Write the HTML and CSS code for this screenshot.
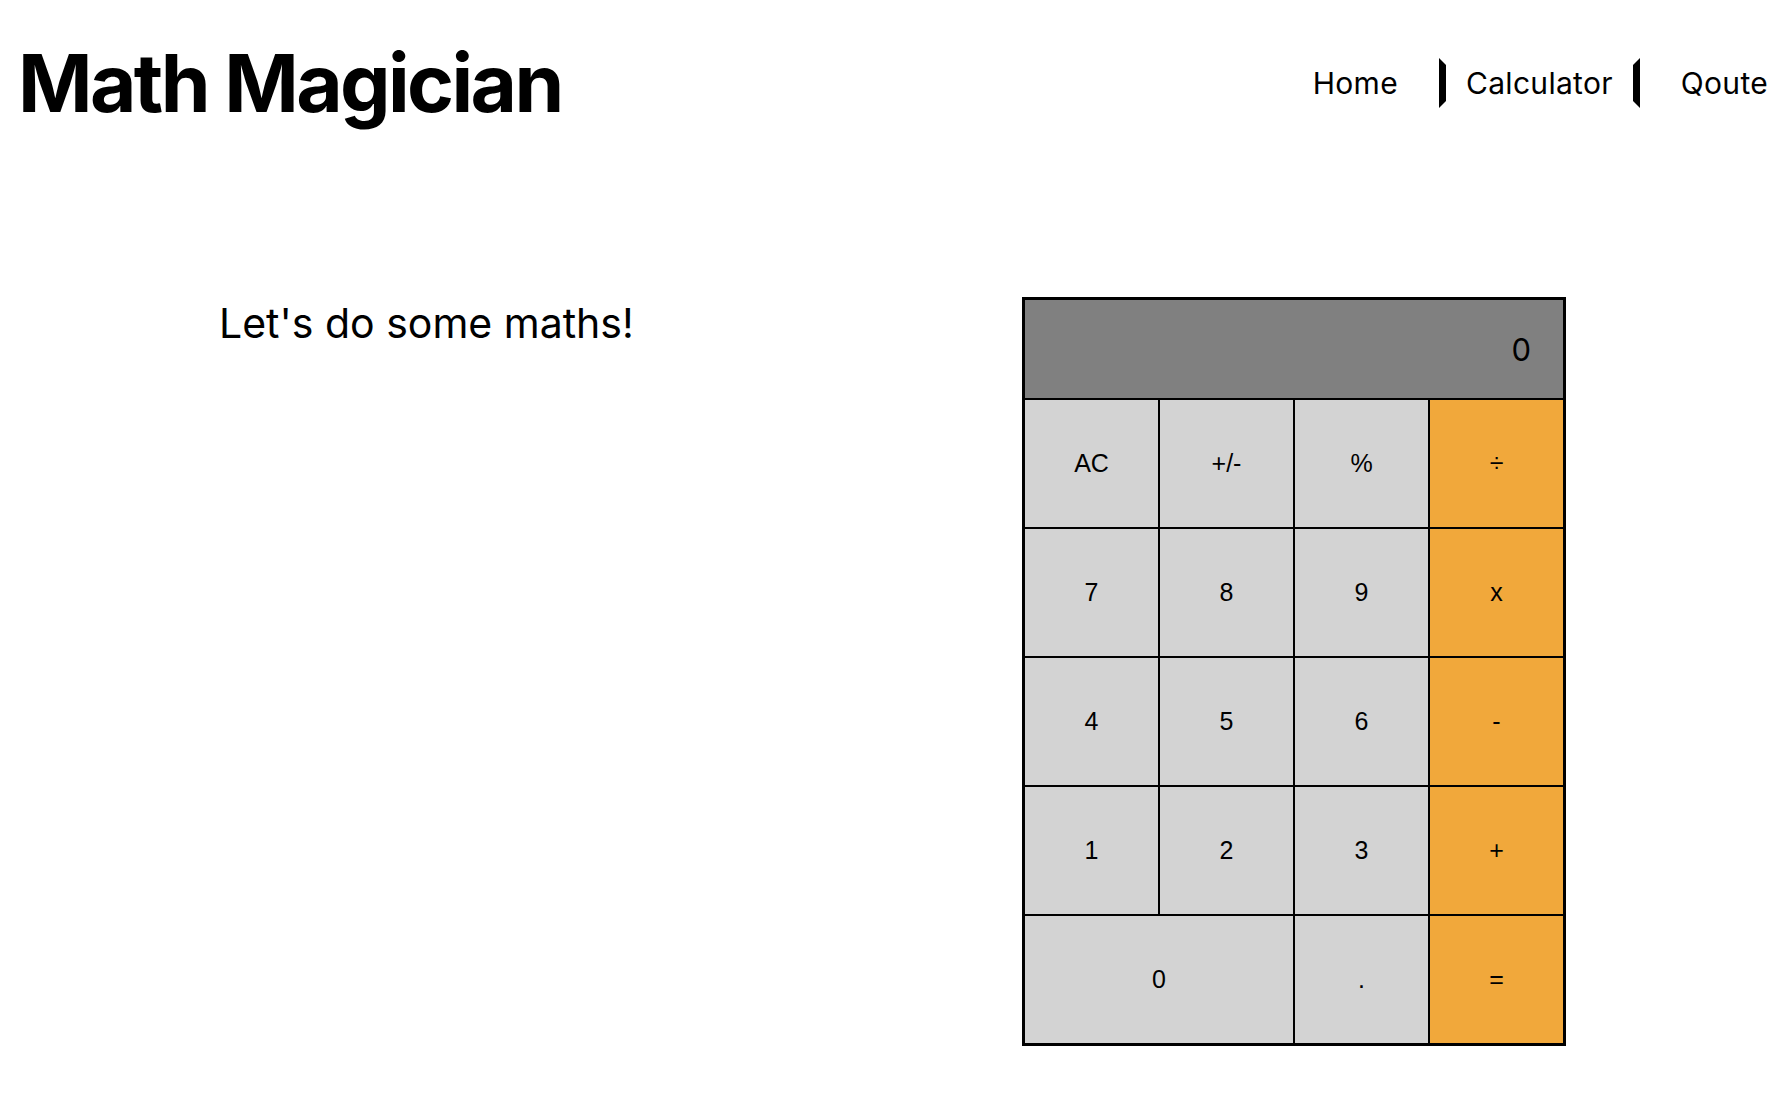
FILE: index.html
```html
<!DOCTYPE html>
<html lang="en">
<head>
<meta charset="utf-8">
<title>Math Magician</title>
<link rel="stylesheet" href="styles.css">
</head>
<body>
<header class="header">
  <h1 class="logo">Math Magician</h1>
  <nav>
    <ul class="nav-list">
      <li class="nav-item"><a class="nav-link" href="#">Home</a></li>
      <li class="nav-item nav-item-mid"><a class="nav-link" href="#">Calculator</a></li>
      <li class="nav-item nav-item-last"><a class="nav-link" href="#">Qoute</a></li>
    </ul>
  </nav>
</header>
<main class="main">
  <h2 class="intro">Let's do some maths!</h2>
  <div class="calculator">
    <div class="display">0</div>
    <button class="key">AC</button>
    <button class="key">+/-</button>
    <button class="key">%</button>
    <button class="key key-op">÷</button>
    <button class="key">7</button>
    <button class="key">8</button>
    <button class="key">9</button>
    <button class="key key-op">x</button>
    <button class="key">4</button>
    <button class="key">5</button>
    <button class="key">6</button>
    <button class="key key-op">-</button>
    <button class="key">1</button>
    <button class="key">2</button>
    <button class="key">3</button>
    <button class="key key-op">+</button>
    <button class="key key-zero">0</button>
    <button class="key">.</button>
    <button class="key key-op">=</button>
  </div>
</main>
</body>
</html>
```
FILE: styles.css
```css
* { box-sizing: border-box; }

body {
  margin: 0;
  font-family: Inter, "Noto Sans", sans-serif;
  color: #000;
  background: #fff;
}

.header {
  display: flex;
  justify-content: space-between;
  align-items: center;
  padding: 34px 0 0 18px;
}

.logo {
  margin: 0;
  font-size: 80px;
  font-weight: 700;
  letter-spacing: -2.6px;
  line-height: 97px;
}

.nav-list {
  list-style: none;
  margin: 0;
  padding: 0;
  display: flex;
  align-items: center;
  gap: 14px;
}

.nav-item {
  height: 50px;
  display: flex;
  align-items: center;
  border: 7px solid transparent;
}

.nav-item-mid {
  border-color: transparent #000;
}

.nav-item-last .nav-link {
  padding-right: 7px;
}

.nav-link {
  color: #000;
  text-decoration: none;
  font-size: 30px;
  letter-spacing: 0.3px;
  padding: 0 20px;
}

.main {
  display: flex;
  align-items: flex-start;
  padding: 166px 216px 0 219px;
}

.intro {
  margin: 2px 0 0;
  font-size: 41px;
  font-weight: 400;
  line-height: 49px;
}

.calculator {
  margin-left: auto;
  width: 544px;
  display: grid;
  grid-template-columns: repeat(4, 1fr);
  grid-template-rows: 98px repeat(5, 127px);
  gap: 2px;
  border: 3px solid #000;
  background: #000;
}

.display {
  grid-column: 1 / -1;
  background: #808080;
  display: flex;
  align-items: center;
  justify-content: flex-end;
  padding-right: 32px;
  font-size: 31px;
}

.key {
  border: 0;
  margin: 0;
  padding: 0;
  background: #d3d3d3;
  font-family: "Liberation Sans", Arial, sans-serif;
  font-size: 25px;
  color: #000;
}

.key-op {
  background: #f1a83b;
}

.key-zero {
  grid-column: span 2;
}
```
